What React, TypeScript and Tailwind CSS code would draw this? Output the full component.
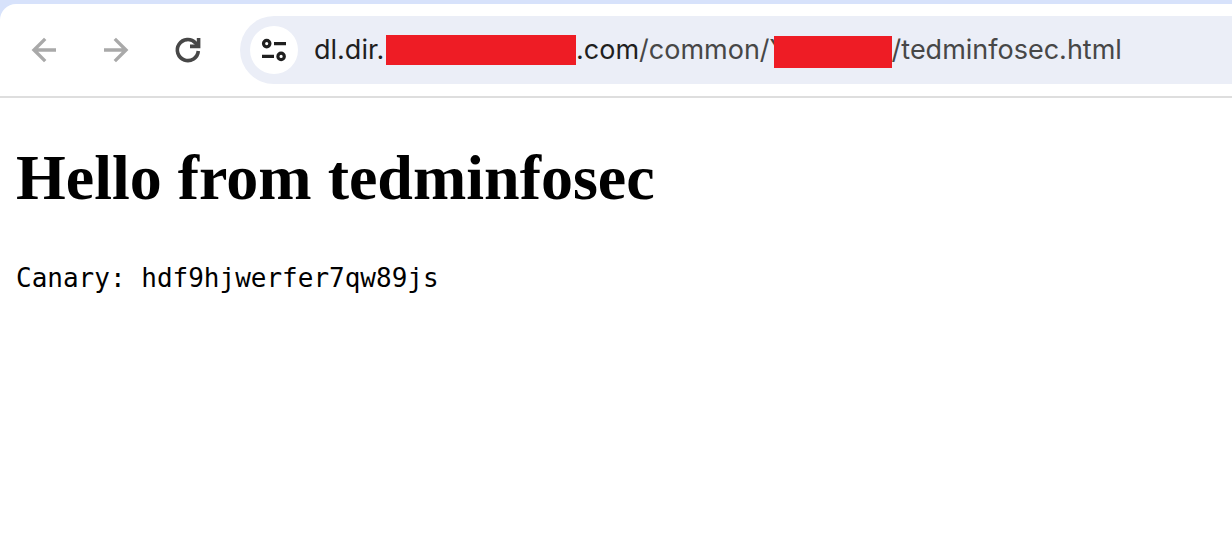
import type { ReactNode } from "react";

function NavButton({ label, disabled, children }: { label: string; disabled?: boolean; children: ReactNode }) {
  return (
    <button type="button" aria-label={label} disabled={disabled} className="flex size-12 items-center justify-center rounded-full">
      {children}
    </button>
  );
}

function Toolbar() {
  return (
    <header className="bg-[#d7e2fb] pt-1">
      <div className="flex items-center rounded-tl-2xl border-b-2 border-[#dedede] bg-white py-3 pl-5">
        <nav aria-label="History" className="flex gap-6">
          <NavButton label="Back" disabled>
            <svg width="48" height="48" viewBox="0 0 48 48" fill="none" stroke="#a9a9a9" strokeWidth="3.4">
              <path d="M36 24H14M25.2 12.9L14 24l11.2 11.1" />
            </svg>
          </NavButton>
          <NavButton label="Forward" disabled>
            <svg width="48" height="48" viewBox="0 0 48 48" fill="none" stroke="#a9a9a9" strokeWidth="3.4">
              <path d="M12 24h22M22.8 12.9L34 24 22.8 35.1" />
            </svg>
          </NavButton>
          <NavButton label="Reload">
            <svg width="48" height="48" viewBox="0 0 48 48" fill="none" stroke="#474747" strokeWidth="3.6">
              <path d="M34.3 25A10.5 10.5 0 1 1 31.6 17L33.8 20" />
              <path d="M26 20.4h8.6V12" />
            </svg>
          </NavButton>
        </nav>
        <div className="ml-7 flex h-17 min-w-0 flex-1 items-center gap-4 rounded-l-full bg-[#ebeef7] pl-2.5">
          <button type="button" aria-label="View site information" className="flex size-12 shrink-0 items-center justify-center rounded-full bg-white">
            <svg width="48" height="48" viewBox="0 0 48 48" fill="none" stroke="#1f1f1f" strokeWidth="3.2">
              <circle cx="16.7" cy="17.6" r="3.2" />
              <path d="M24 17.6h12M12 30.4h12" />
              <circle cx="31.1" cy="30.4" r="3.2" />
            </svg>
          </button>
          <div role="textbox" aria-label="Address" tabIndex={0} className="flex items-center font-['Inter',sans-serif] text-[27px] leading-8 whitespace-nowrap text-[#474747]">
            <span className="w-18 text-[#1f1f1f]">dl.dir.</span>
            <span className="relative h-[30px] w-[190px] bg-[#ee1c25]" />
            <span className="text-[#1f1f1f]">.com</span>
            <span>/common/</span>
            <span className="w-1">Y</span>
            <span className="relative mt-1 h-8 w-[118px] bg-[#ee1c25]" />
            <span>/tedminfosec.html</span>
          </div>
        </div>
      </div>
    </header>
  );
}

export default function App() {
  return (
    <div className="min-h-screen bg-white text-black">
      <Toolbar />
      <main className="px-4 pt-11">
        <h1 className="font-['Liberation_Serif',serif] text-[64px] leading-[72px] font-bold">Hello from tedminfosec</h1>
        <pre className="mt-12 font-['DejaVu_Sans_Mono',monospace] text-[26px] leading-8">Canary: hdf9hjwerfer7qw89js</pre>
      </main>
    </div>
  );
}
